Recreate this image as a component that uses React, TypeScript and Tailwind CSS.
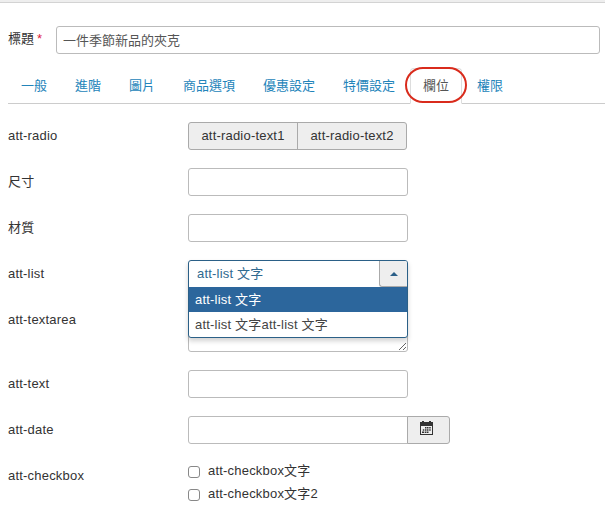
import React from "react";

interface FieldRowProps {
	label: string;
	className?: string;
	children: React.ReactNode;
}

const TABS = [
	"一般",
	"進階",
	"圖片",
	"商品選項",
	"優惠設定",
	"特價設定",
	"欄位",
	"權限",
];

const ACTIVE_TAB = "欄位";

const inputClass =
	"block h-7 w-[220px] rounded-[3px] border border-[#bbb] bg-white px-1.5 outline-none";

const FieldRow: React.FC<FieldRowProps> = ({
	label,
	className = "mb-[18px]",
	children,
}) => (
	<div className={`flex items-start ${className}`}>
		<div className="w-[180px] shrink-0 pt-[5px]">{label}</div>
		<div>{children}</div>
	</div>
);

const Tabs: React.FC = () => (
	<ul className="mt-3.5 ml-2 flex h-9 border-b border-[#ccc]">
		{TABS.map((tab) => {
			const active = tab === ACTIVE_TAB;
			return (
				<li
					key={tab}
					className={`relative mr-0.5 h-9 rounded-t border px-3 pt-2 ${
						active
							? "border-[#ddd] border-b-white bg-white text-[#555]"
							: "border-transparent text-[#2384ba]"
					}`}>
					{tab}
					{/* Highlight ring around the current tab */}
					{active && (
						<span className="absolute -top-[2px] -left-[6px] h-9 w-[62px] rounded-[18px] border-2 border-[#d92b1c]" />
					)}
				</li>
			);
		})}
	</ul>
);

const ListSelect: React.FC = () => (
	<div className="relative h-7 w-[220px]">
		<div className="absolute top-0 left-0 z-10 w-[220px] overflow-hidden rounded-[3px] border border-[#2b6087] bg-white shadow-[0_3px_5px_rgba(0,0,0,0.18)]">
			<div className="flex h-[26px] text-[#2f6990]">
				<span className="flex-1 pt-[4px] pl-2">att-list 文字</span>
				<span className="flex w-7 items-center justify-center rounded-bl-[3px] border-b border-l border-[#aaa] bg-[#eee]">
					<svg width="8" height="4" viewBox="0 0 8 4">
						<path d="M4 0 8 4H0z" fill="#2b5f88" />
					</svg>
				</span>
			</div>
			<div className="h-[25px] bg-[#2c669c] pt-[4px] pl-1.5 text-white">
				att-list 文字
			</div>
			<div className="h-[25px] pt-[4px] pl-1.5 text-[#444]">
				att-list 文字att-list 文字
			</div>
		</div>
	</div>
);

const CalendarIcon: React.FC = () => (
	<svg width="13" height="14" viewBox="0 0 13 14" fill="#333">
		<path d="M0 1h2V0h2v1h5V0h2v1h2v13H0zM1 5v8h11V5z" fillRule="evenodd" />
		<path d="M5 6h1.5v1.5H5zM7 6h1.5v1.5H7zM9.2 6h1.5v1.5H9.2zM2.8 8.2h1.5v1.5H2.8zM5 8.2h1.5v1.5H5zM7 8.2h1.5v1.5H7zM9.2 8.2h1.5v1.5H9.2zM2 10.4h2.3v1.5H2zM5 10.4h1.5v1.5H5zM7 10.4h1.5v1.5H7z" />
	</svg>
);

const Checkbox: React.FC<{ label: string }> = ({ label }) => (
	<label className="mb-[5px] flex h-[18px] items-start">
		<input
			type="checkbox"
			className="mt-1 mr-2 h-3 w-3 appearance-none rounded-[3px] border border-[#888] bg-white"
		/>
		{label}
	</label>
);

export default function App() {
	return (
		<div className="h-[507px] w-[605px] overflow-hidden bg-white font-['Liberation_Sans','Noto_Sans_CJK_TC',sans-serif] text-[13px] leading-[18px] text-[#333]">
			<div className="h-[3px] border-b border-[#d3d3d3] bg-[#eee]" />

			<div className="mt-[23px] flex pl-2">
				<div className="w-12 pt-[4px]">
					標題<span className="ml-[3px] text-[#e0203c]">*</span>
				</div>
				<input
					type="text"
					defaultValue="一件季節新品的夾克"
					className="h-7 w-[544px] rounded-[3px] border border-[#bbb] px-1.5 pb-0.5 text-[#555] outline-none"
				/>
			</div>

			<Tabs />

			<div className="mt-[18px] pl-2 tracking-[0.2px]">
				<FieldRow label="att-radio">
					<div className="flex h-7 w-[219px] overflow-hidden rounded-[3px] border border-[#aaa] bg-[#eee] pt-[4px] text-center">
						<span className="-mt-[4px] w-[109px] border-r border-[#aaa] pt-[4px]">
							att-radio-text1
						</span>
						<span className="flex-1">att-radio-text2</span>
					</div>
				</FieldRow>
				<FieldRow label="尺寸">
					<input type="text" className={inputClass} />
				</FieldRow>
				<FieldRow label="材質">
					<input type="text" className={inputClass} />
				</FieldRow>
				<FieldRow label="att-list">
					<ListSelect />
				</FieldRow>
				<FieldRow label="att-textarea">
					<textarea className="block h-[46px] w-[220px] resize rounded-[3px] border border-[#bbb]" />
				</FieldRow>
				<FieldRow label="att-text">
					<input type="text" className={inputClass} />
				</FieldRow>
				<FieldRow label="att-date">
					<div className="flex">
						<input
							type="text"
							className="h-7 w-[220px] rounded-l-[3px] border border-[#bbb] outline-none"
						/>
						<button
							type="button"
							className="-ml-px flex h-7 w-[43px] rounded-r-[3px] border border-[#aaa] bg-[#eee] pt-[4px] pl-3">
							<CalendarIcon />
						</button>
					</div>
				</FieldRow>
				<FieldRow label="att-checkbox" className="">
					<Checkbox label="att-checkbox文字" />
					<Checkbox label="att-checkbox文字2" />
				</FieldRow>
			</div>
		</div>
	);
}
